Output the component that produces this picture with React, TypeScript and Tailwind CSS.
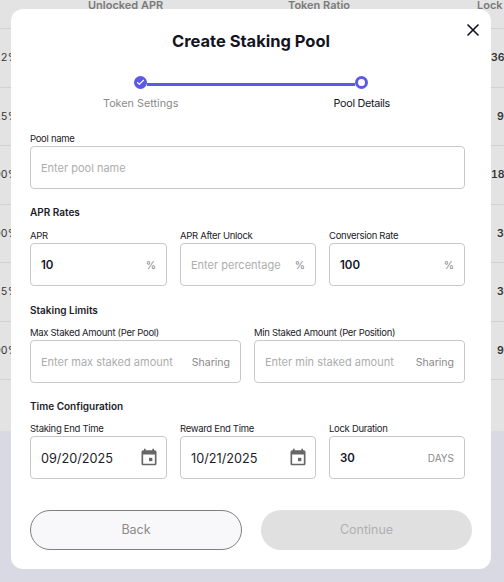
import React from "react";
import { X, Check } from "lucide-react";

const font = "font-['Inter','Liberation_Sans',sans-serif]";

function Label({ children }: { children: React.ReactNode }) {
  return <label className="block text-[9.5px] leading-[15px] h-[14px] text-[#1c1c28] tracking-[-0.3px] whitespace-nowrap">{children}</label>;
}

function Heading({ children }: { children: React.ReactNode }) {
  return <h3 className="text-[10px] leading-[14px] font-semibold text-[#1c1c28] whitespace-nowrap">{children}</h3>;
}

function Box({ children }: { children: React.ReactNode }) {
  return <div className="mt-[1px] h-[43px] border border-[#c9c9c9] rounded-[4px] bg-white flex items-center justify-between pl-[10px] pr-[10px] pt-[2px] whitespace-nowrap">{children}</div>;
}

function Ph({ children }: { children: React.ReactNode }) {
  return <span className="text-[11px] text-[#adadad]">{children}</span>;
}

function Val({ children }: { children: React.ReactNode }) {
  return <span className="text-[11.5px] font-semibold text-[#14141f]">{children}</span>;
}

function Suffix({ children }: { children: React.ReactNode }) {
  return <span className="text-[10.5px] text-[#8a8a8a]">{children}</span>;
}

function Calendar() {
  return (
    <svg width="20" height="20" viewBox="0 0 24 24" fill="#666666" className="-mr-[3px] -mt-[4px]">
      <path d="M19 4h-1V2h-2v2H8V2H6v2H5c-1.11 0-2 .9-2 2v14c0 1.1.89 2 2 2h14c1.1 0 2-.9 2-2V6c0-1.1-.9-2-2-2zm0 16H5V9h14v11z" />
      <rect x="12" y="13" width="4" height="4" />
    </svg>
  );
}

const rows = [
  { l: "12%", r: "365", pad: "pl-0" },
  { l: "15%", r: "90", pad: "pl-[6px]" },
  { l: "100%", r: "180", pad: "pl-0" },
  { l: "100%", r: "30", pad: "pl-[6px]" },
  { l: "15%", r: "30", pad: "pl-[6px]" },
  { l: "100%", r: "90", pad: "pl-[6px]" },
];

export default function App() {
  return (
    <div className={`relative w-[504px] h-[582px] overflow-hidden bg-[#d9d9e3] ${font}`}>
      <div className="bg-[#e3e3e3] h-[431px]">
        <div className="h-[29px] border-b border-[#d2d2d2] flex items-center text-[11px] font-semibold text-[#7a7a7a] whitespace-nowrap">
          <span className="ml-[88px] w-[200px] -mt-[17px]">Unlocked APR</span>
          <span className="w-[189px] -mt-[17px]">Token Ratio</span>
          <span className="-mt-[17px]">Lock</span>
        </div>
        {rows.map((r, i) => (
          <div key={i} className="h-[58.5px] pt-[1px] border-b border-[#d2d2d2] flex items-center justify-between text-[10.5px] text-[#333333] whitespace-nowrap tabular-nums">
            <span className="w-[18px] flex justify-end">{r.l}</span>
            <span className={`font-semibold w-[13px] ${r.pad}`}>{r.r}</span>
          </div>
        ))}
      </div>

      <div className="absolute left-[11px] top-[9px] w-[480px] h-[560px] bg-white rounded-[12px] pt-[23px] px-[19px] text-[#1c1c28]">
        <button className="absolute right-[8px] top-[11px] text-[#14141f]"><X size={20} strokeWidth={2} /></button>
        <h2 className="text-center text-[16.5px] leading-[18px] font-bold text-[#14141f]">Create Staking Pool</h2>

        <div className="mt-[26px] h-[13px] mx-[104px]">
          <div className="flex items-center h-[13px]">
            <span className="w-[13px] h-[13px] rounded-full bg-[#5a5ae6] flex items-center justify-center shrink-0">
              <Check size={9} strokeWidth={3} className="text-white" />
            </span>
            <span className="h-[3px] flex-1 bg-[#5a5ae6] mt-[3px]" />
            <span className="w-[13px] h-[13px] rounded-full border-[3px] border-[#5a5ae6] bg-white shrink-0" />
          </div>
        </div>
        <div className="mt-[8px] flex justify-between text-[10.8px] leading-[14px] pl-[73px] pr-[82px] whitespace-nowrap">
          <span className="text-[#8a8a8a]">Token Settings</span>
          <span className="text-[#14141f] tracking-[-0.3px]">Pool Details</span>
        </div>

        <div className="mt-[20px] w-[435px]">
          <Label>Pool name</Label>
          <Box><Ph>Enter pool name</Ph></Box>
        </div>

        <div className="mt-[16px]"><Heading>APR Rates</Heading></div>
        <div className="mt-[9px] grid grid-cols-[137px_136px_136px] gap-x-[13px]">
          <div><Label>APR</Label><Box><Val>10</Val><Suffix>%</Suffix></Box></div>
          <div><Label>APR After Unlock</Label><Box><Ph>Enter percentage</Ph><Suffix>%</Suffix></Box></div>
          <div><Label>Conversion Rate</Label><Box><Val>100</Val><Suffix>%</Suffix></Box></div>
        </div>

        <div className="mt-[17px]"><Heading>Staking Limits</Heading></div>
        <div className="mt-[8px] grid grid-cols-[211px_211px] gap-x-[13px]">
          <div><Label>Max Staked Amount (Per Pool)</Label><Box><Ph>Enter max staked amount</Ph><Suffix>Sharing</Suffix></Box></div>
          <div><Label>Min Staked Amount (Per Position)</Label><Box><Ph>Enter min staked amount</Ph><Suffix>Sharing</Suffix></Box></div>
        </div>

        <div className="mt-[16px]"><Heading>Time Configuration</Heading></div>
        <div className="mt-[8px] grid grid-cols-[137px_136px_136px] gap-x-[13px]">
          <div><Label>Staking End Time</Label><Box><span className="text-[12.7px] text-[#1c1c28]">09/20/2025</span><Calendar /></Box></div>
          <div><Label>Reward End Time</Label><Box><span className="text-[12.7px] text-[#1c1c28]">10/21/2025</span><Calendar /></Box></div>
          <div><Label>Lock Duration</Label><Box><Val>30</Val><span className="text-[10px] text-[#8a8a8a]">DAYS</span></Box></div>
        </div>

        <div className="mt-[31px] flex justify-between">
          <button className="w-[212px] h-[40px] rounded-full border border-[#808080] bg-[#f8f8fa] text-[12.5px] text-[#8a8a8a]">Back</button>
          <button className="w-[211px] h-[40px] rounded-full bg-[#e0e0e0] text-[12.5px] text-[#b0b0b0]">Continue</button>
        </div>
      </div>
    </div>
  );
}
